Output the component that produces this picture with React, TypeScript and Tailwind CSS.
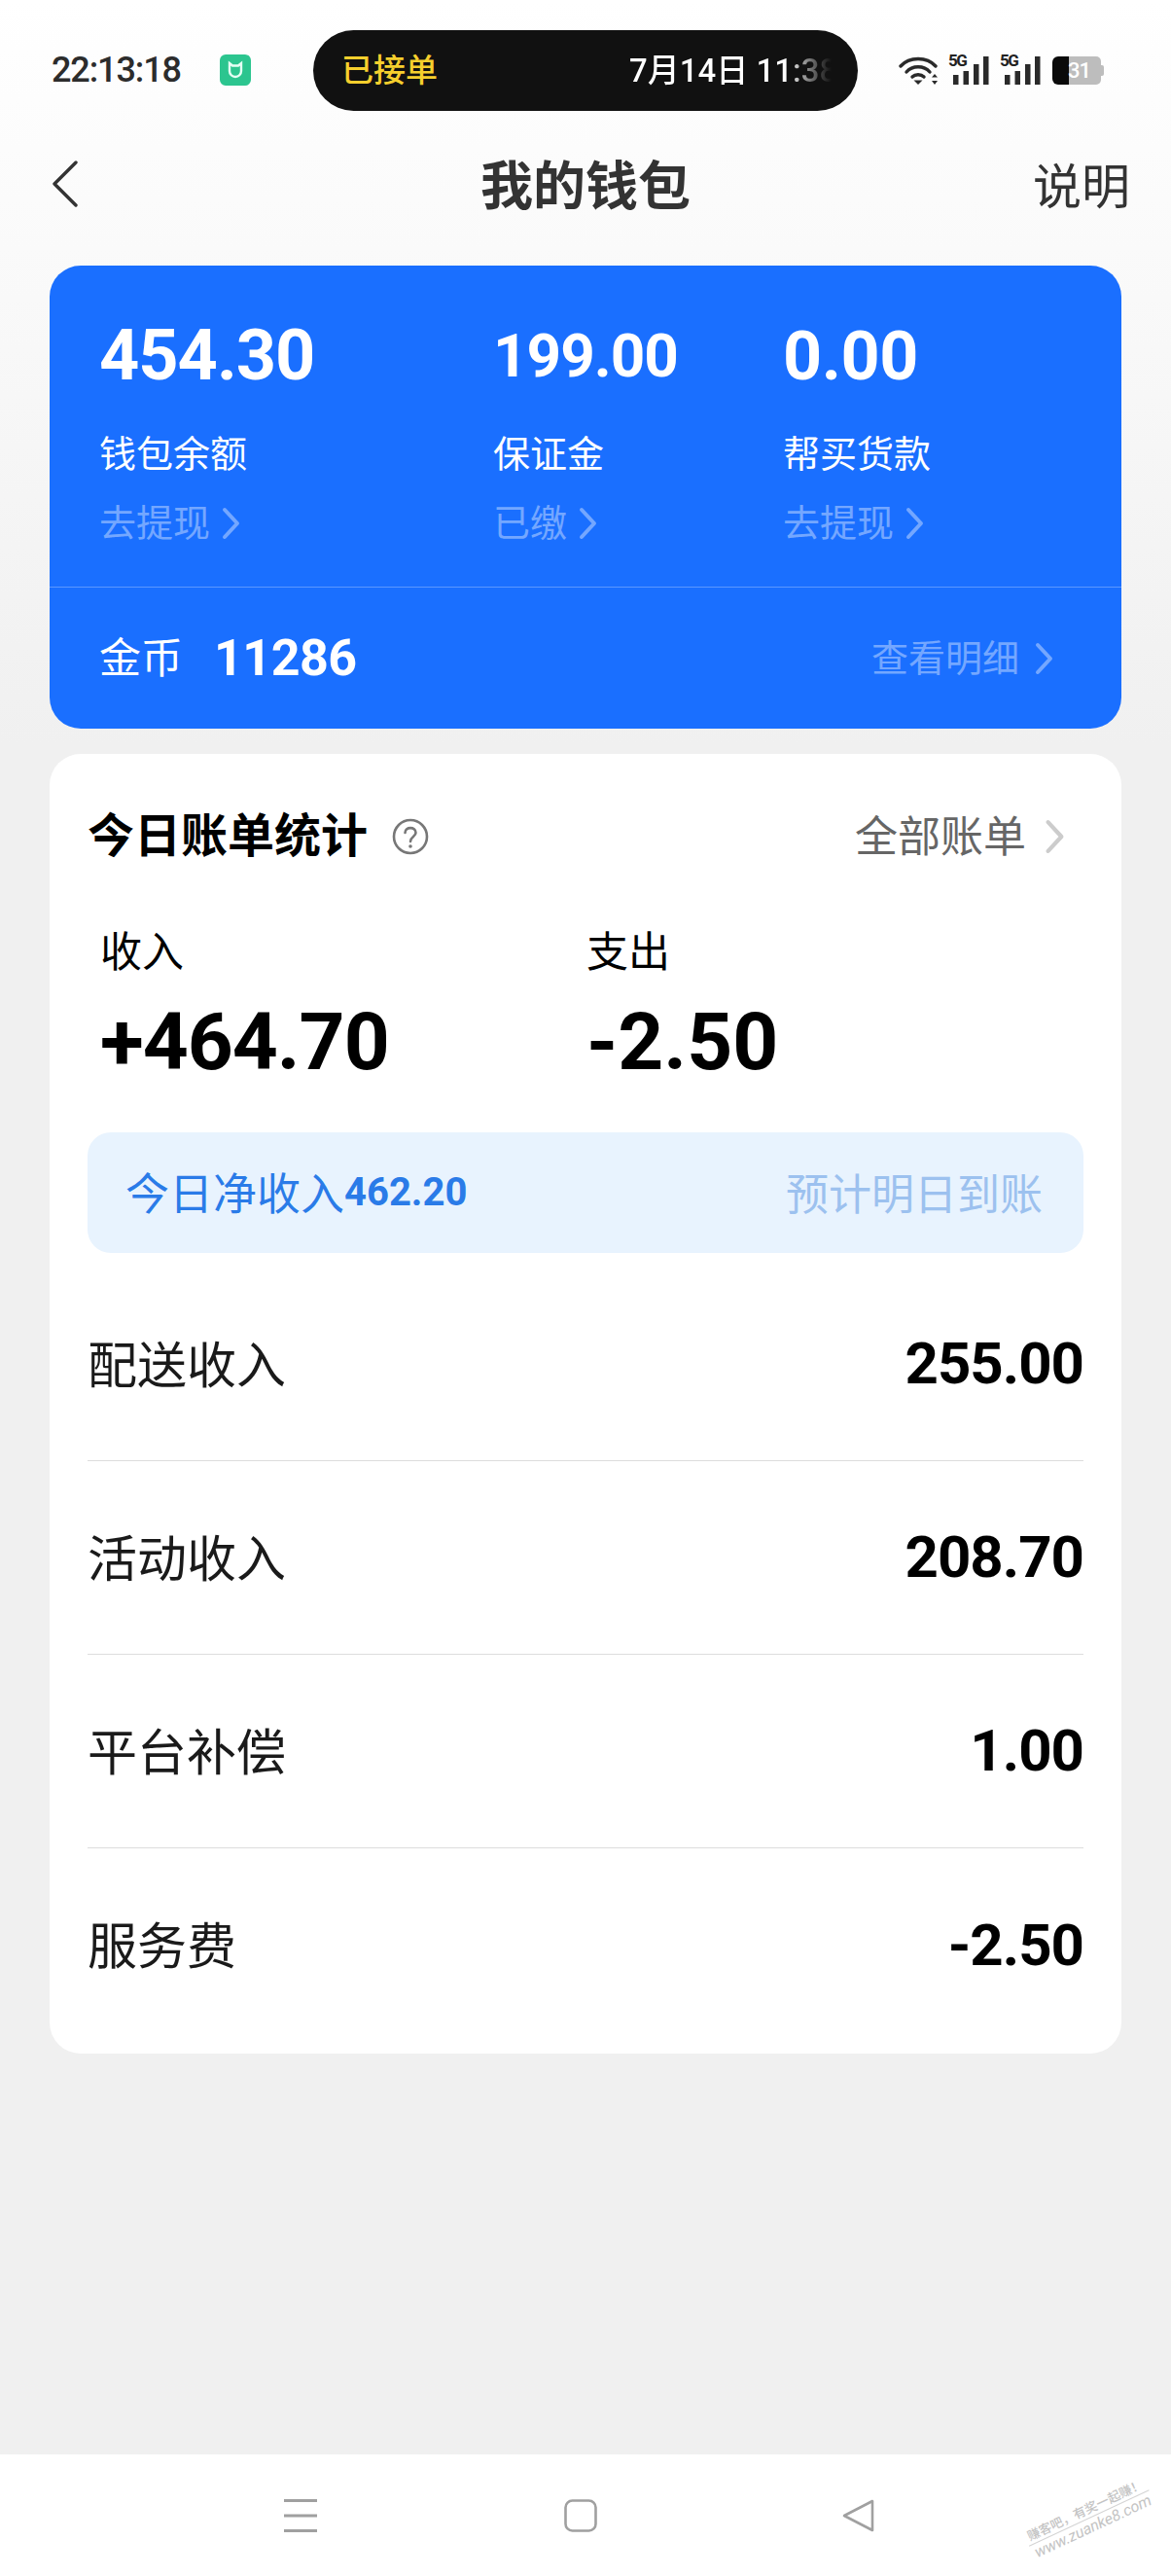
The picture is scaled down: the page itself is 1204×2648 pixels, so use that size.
import React from 'react';

const cjk = "font-['Roboto','Noto_Sans_CJK_SC',sans-serif]";

const Chevron = ({ className }: { className: string }) => (
  <svg viewBox="0 0 20 34" fill="none" className={className}>
    <path d="M3 3 L16 17 L3 31" stroke="currentColor" strokeWidth="4" strokeLinecap="round" strokeLinejoin="round" />
  </svg>
);

const Signal = () => (
  <div className="relative w-[42px] h-[29px]">
    <span className="absolute left-0 top-[-3px] text-[17px] leading-[15px] font-bold tracking-[-1.5px] text-[#222]">5G</span>
    <svg viewBox="0 0 42 29" className="w-[42px] h-[29px]" fill="#2a2a2a">
      <rect x="5" y="19" width="5.5" height="10" />
      <rect x="15.5" y="15" width="5.5" height="14" />
      <rect x="26" y="8" width="5.5" height="21" />
      <rect x="36" y="0" width="5.5" height="29" />
    </svg>
  </div>
);

const StatusBar = () => (
  <div className="h-[147px] flex items-start pl-[53px]">
    <span className="mt-[52px] w-[173px] text-[36px] leading-[41px] font-medium tracking-[-1.1px] text-[#2c2c2c]">22:13:18</span>
    <div className="mt-[56px] w-[32px] h-[32px] rounded-[6px] bg-[#2cc58f] flex items-center justify-center">
      <svg viewBox="0 0 20 20" className="w-[20px] h-[20px]" fill="none" stroke="#e6fff5" strokeWidth="2.4">
        <path d="M4 3 L7 5.5 H13 L16 3 V11 A6 6 0 0 1 4 11 Z" />
      </svg>
    </div>
    <div className="mt-[31px] ml-[64px] w-[560px] h-[83px] rounded-full bg-[#111111] flex items-center pl-[29px] overflow-hidden">
      <span className="w-[296px] text-[33px] leading-[40px] font-medium text-[#f6cf2d]">已接单</span>
      <span className="w-[208px] whitespace-nowrap overflow-hidden text-[33px] leading-[40px] font-medium text-transparent bg-clip-text bg-gradient-to-r from-white from-[78%] to-[#111111] to-[100%]">
        7月14日 11:38
      </span>
    </div>
    <div className="mt-[58px] ml-[42px] flex items-start">
      <svg viewBox="0 0 41 29" className="w-[41px] h-[29px] mr-[10px]" fill="none" stroke="#2a2a2a" strokeWidth="3.4" strokeLinecap="round">
        <path d="M2 10 C11 0 29 0 38 10" />
        <path d="M8 16 C14 9 26 9 32 16" />
        <path d="M14 21 C17 18 23 18 26 21" />
        <path d="M20 29 L15.5 24.5 H24.5 Z" fill="#2a2a2a" stroke="none" />
        <path d="M37 18 L34 21.5 H40 Z M37 29 L34 25 H40 Z" fill="#2a2a2a" stroke="none" />
      </svg>
      <Signal />
      <div className="w-[11px]" />
      <Signal />
      <div className="ml-[12px] relative w-[54px] h-[29px] flex">
        <div className="w-[17px] h-[29px] bg-[#0a0a0a] rounded-l-[6px]" />
        <div className="w-[33px] h-[29px] bg-[#bdbdbd] rounded-r-[5px]" />
        <div className="w-[3px] h-[11px] mt-[9px] bg-[#bdbdbd] rounded-r-[2px]" />
        <span className="absolute left-[16px] top-0 text-[22px] leading-[29px] font-medium tracking-[-1px] text-white">31</span>
      </div>
    </div>
  </div>
);

const Header = () => (
  <div className="h-[126px] grid grid-cols-[1fr_auto_1fr] items-start pl-[54px] pr-[54px]">
    <svg viewBox="0 0 26 48" fill="none" className="w-[26px] h-[48px] mt-[18px]">
      <path d="M24 2 L2 24 L24 46" stroke="#333333" strokeWidth="3.4" strokeLinecap="round" strokeLinejoin="round" />
    </svg>
    <h1 className="mt-[14px] text-[54px] leading-[64px] font-bold text-[#333333]">我的钱包</h1>
    <span className="mt-[14px] -mr-[12px] text-right text-[50px] leading-[64px] text-[#333333]">说明</span>
  </div>
);

const balances = [
  { amount: '454.30', label: '钱包余额', link: '去提现', width: 'w-[405px]', size: 'text-[72px] tracking-[-1px]' },
  { amount: '199.00', label: '保证金', link: '已缴', width: 'w-[298px]', size: 'text-[62px] tracking-[-1px]' },
  { amount: '0.00', label: '帮买货款', link: '去提现', width: 'w-[300px]', size: 'text-[70px] tracking-[-0.5px]' },
];

const WalletCard = () => (
  <section className="mx-[51px] h-[476px] rounded-[32px] bg-[#1a6fff] flex flex-col">
    <div className="h-[331px] border-b border-[#5b97ff] pl-[51px] pt-[57px] flex">
      {balances.map(b => (
        <div key={b.label} className={b.width}>
          <div className={`h-[72px] leading-[72px] font-bold text-white ${b.size}`}>{b.amount}</div>
          <div className="mt-[41px] text-[38px] leading-[48px] text-white">{b.label}</div>
          <div className="mt-[24px] flex items-center text-[38px] leading-[46px] text-[#74a7ff]">
            <span>{b.link}</span>
            <Chevron className="ml-[12px] w-[20px] h-[34px]" />
          </div>
        </div>
      ))}
    </div>
    <div className="flex-1 flex items-center pl-[51px] pr-[69px]">
      <span className="text-[43px] leading-[52px] text-white">金币</span>
      <span className="ml-[32px] text-[52px] leading-[60px] font-bold tracking-[-0.5px] text-white">11286</span>
      <span className="ml-auto text-[38px] leading-[48px] text-[#74a7ff]">查看明细</span>
      <Chevron className="ml-[16px] w-[20px] h-[34px] text-[#74a7ff]" />
    </div>
  </section>
);

const rows = [
  { name: '配送收入', value: '255.00' },
  { name: '活动收入', value: '208.70' },
  { name: '平台补偿', value: '1.00' },
  { name: '服务费', value: '-2.50' },
];

const BillCard = () => (
  <section className="mx-[51px] mt-[26px] h-[1336px] rounded-[32px] bg-white px-[39px] pt-[60px]">
    <div className="flex items-center h-[50px]">
      <h2 className="text-[48px] leading-[50px] font-bold text-black">今日账单统计</h2>
      <svg viewBox="0 0 38 38" fill="none" className="ml-[25px] w-[38px] h-[38px]">
        <circle cx="19" cy="19" r="17" stroke="#777777" strokeWidth="2.6" />
        <path d="M13.5 15 C13.5 8.5 24.5 8.5 24.5 15 C24.5 19 19 19 19 24" stroke="#777777" strokeWidth="2.6" strokeLinecap="round" />
        <circle cx="19" cy="29" r="1.8" fill="#777777" />
      </svg>
      <span className="ml-auto mt-[2px] text-[44px] leading-[50px] text-[#666666]">全部账单</span>
      <Chevron className="ml-[19px] mr-[18px] w-[22px] h-[36px] text-[#cccccc]" />
    </div>
    <div className="mt-[69px] pl-[13px] flex">
      <div className="w-[500px]">
        <div className="text-[43px] leading-[50px] text-black">收入</div>
        <div className="mt-[22px] text-[82px] leading-[90px] font-bold text-black tracking-[-1px]">+464.70</div>
      </div>
      <div>
        <div className="text-[43px] leading-[50px] text-black">支出</div>
        <div className="mt-[22px] text-[82px] leading-[90px] font-bold text-black">-2.50</div>
      </div>
    </div>
    <div className="mt-[48px] h-[124px] rounded-[24px] bg-[#e8f3fe] flex items-center pl-[39px] pr-[42px]">
      <span className="mt-[5px] text-[45px] leading-[52px] text-[#2a7be8]">今日净收入</span>
      <span className="text-[40px] leading-[52px] font-bold text-[#2a7be8]">462.20</span>
      <span className="mt-[5px] ml-auto text-[44px] leading-[52px] text-[#9cc1ef]">预计明日到账</span>
    </div>
    <div className="mt-[15px]">
      {rows.map((r, i) => (
        <div key={r.name} className={`h-[199px] flex items-center justify-between ${i < rows.length - 1 ? 'border-b border-[#dddddd]' : ''}`}>
          <span className="mt-[5px] text-[51px] leading-[60px] text-[#1a1a1a]">{r.name}</span>
          <span className="text-[60px] leading-[70px] font-bold tracking-[-1px] text-black">{r.value}</span>
        </div>
      ))}
    </div>
  </section>
);

const NavBar = () => (
  <div className="h-[125px] bg-white relative flex items-start pt-[46px] pl-[292px]">
    <svg viewBox="0 0 34 34" className="w-[34px] h-[34px]" fill="#a0a0a0">
      <rect x="0" y="0" width="34" height="3" />
      <rect x="0" y="15.5" width="34" height="3" />
      <rect x="0" y="31" width="34" height="3" />
    </svg>
    <svg viewBox="0 0 34 34" className="ml-[254px] w-[34px] h-[34px]" fill="none" stroke="#a0a0a0" strokeWidth="2.6">
      <rect x="1.5" y="1.5" width="31" height="31" rx="7" />
    </svg>
    <svg viewBox="0 0 34 34" className="ml-[252px] w-[34px] h-[34px]" fill="none" stroke="#a0a0a0" strokeWidth="2.6" strokeLinejoin="round">
      <path d="M31 2 V32 L2 17 Z" />
    </svg>
    {/* watermark */}
    <div className="absolute left-[1052px] top-[48px] w-[136px] -rotate-[25deg] text-center text-[#c4c4c4]">
      <div className="text-[13px] leading-[17px] font-medium whitespace-nowrap border-b border-[#d4d4d4]">赚客吧，有奖一起赚！</div>
      <div className="text-[16px] leading-[18px] italic whitespace-nowrap">www.zuanke8.com</div>
    </div>
  </div>
);

export default function App() {
  return (
    <div className={`w-[1204px] h-[2648px] flex flex-col overflow-hidden bg-gradient-to-b from-white from-0% to-[#f0f0f0] to-[29%] ${cjk}`}>
      <StatusBar />
      <Header />
      <WalletCard />
      <BillCard />
      <div className="flex-1" />
      <NavBar />
    </div>
  );
}
